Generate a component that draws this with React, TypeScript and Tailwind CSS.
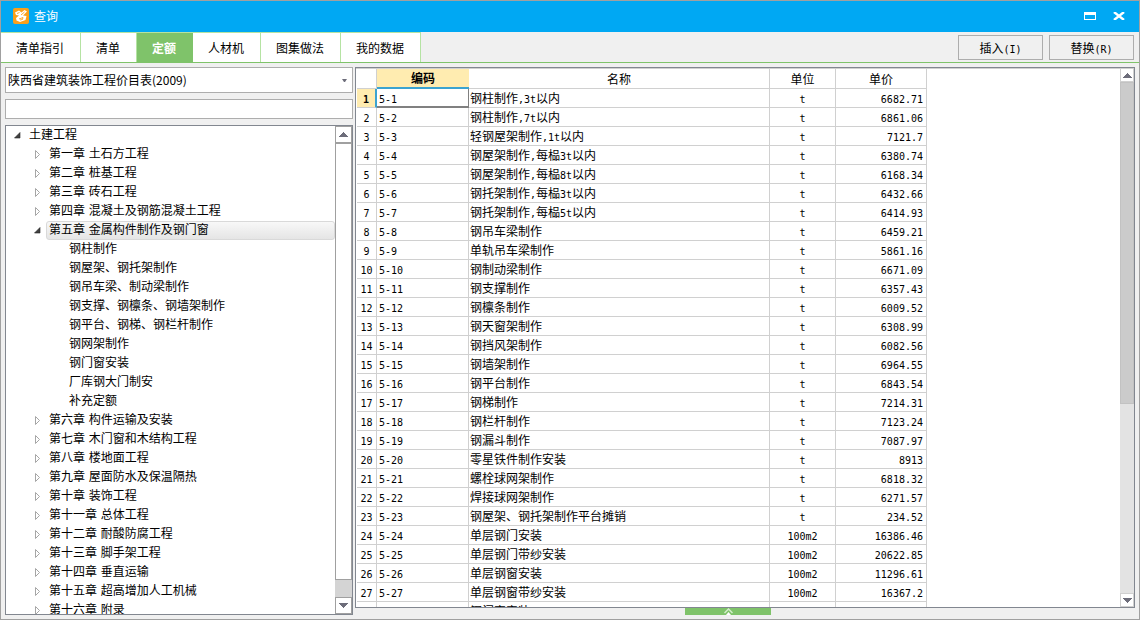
import { useState } from 'react';
import type { ReactNode } from 'react';

interface TreeNode {
  level: number;
  label: string;
  state?: 'open' | 'closed';
}

interface QuotaRow {
  code: string;
  name: string;
  unit: string;
  price: string;
}

const TABS = ['清单指引', '清单', '定额', '人材机', '图集做法', '我的数据'];

const TREE: TreeNode[] = [
  { level: 0, label: '土建工程', state: 'open' },
  { level: 1, label: '第一章 土石方工程', state: 'closed' },
  { level: 1, label: '第二章 桩基工程', state: 'closed' },
  { level: 1, label: '第三章 砖石工程', state: 'closed' },
  { level: 1, label: '第四章 混凝土及钢筋混凝土工程', state: 'closed' },
  { level: 1, label: '第五章 金属构件制作及钢门窗', state: 'open' },
  { level: 2, label: '钢柱制作' },
  { level: 2, label: '钢屋架、钢托架制作' },
  { level: 2, label: '钢吊车梁、制动梁制作' },
  { level: 2, label: '钢支撑、钢檩条、钢墙架制作' },
  { level: 2, label: '钢平台、钢梯、钢栏杆制作' },
  { level: 2, label: '钢网架制作' },
  { level: 2, label: '钢门窗安装' },
  { level: 2, label: '厂库钢大门制安' },
  { level: 2, label: '补充定额' },
  { level: 1, label: '第六章 构件运输及安装', state: 'closed' },
  { level: 1, label: '第七章 木门窗和木结构工程', state: 'closed' },
  { level: 1, label: '第八章 楼地面工程', state: 'closed' },
  { level: 1, label: '第九章 屋面防水及保温隔热', state: 'closed' },
  { level: 1, label: '第十章 装饰工程', state: 'closed' },
  { level: 1, label: '第十一章 总体工程', state: 'closed' },
  { level: 1, label: '第十二章 耐酸防腐工程', state: 'closed' },
  { level: 1, label: '第十三章 脚手架工程', state: 'closed' },
  { level: 1, label: '第十四章 垂直运输', state: 'closed' },
  { level: 1, label: '第十五章 超高增加人工机械', state: 'closed' },
  { level: 1, label: '第十六章 附录', state: 'closed' },
];

const ROWS: QuotaRow[] = [
  { code: '5-1', name: '钢柱制作,3t以内', unit: 't', price: '6682.71' },
  { code: '5-2', name: '钢柱制作,7t以内', unit: 't', price: '6861.06' },
  { code: '5-3', name: '轻钢屋架制作,1t以内', unit: 't', price: '7121.7' },
  { code: '5-4', name: '钢屋架制作,每榀3t以内', unit: 't', price: '6380.74' },
  { code: '5-5', name: '钢屋架制作,每榀8t以内', unit: 't', price: '6168.34' },
  { code: '5-6', name: '钢托架制作,每榀3t以内', unit: 't', price: '6432.66' },
  { code: '5-7', name: '钢托架制作,每榀5t以内', unit: 't', price: '6414.93' },
  { code: '5-8', name: '钢吊车梁制作', unit: 't', price: '6459.21' },
  { code: '5-9', name: '单轨吊车梁制作', unit: 't', price: '5861.16' },
  { code: '5-10', name: '钢制动梁制作', unit: 't', price: '6671.09' },
  { code: '5-11', name: '钢支撑制作', unit: 't', price: '6357.43' },
  { code: '5-12', name: '钢檩条制作', unit: 't', price: '6009.52' },
  { code: '5-13', name: '钢天窗架制作', unit: 't', price: '6308.99' },
  { code: '5-14', name: '钢挡风架制作', unit: 't', price: '6082.56' },
  { code: '5-15', name: '钢墙架制作', unit: 't', price: '6964.55' },
  { code: '5-16', name: '钢平台制作', unit: 't', price: '6843.54' },
  { code: '5-17', name: '钢梯制作', unit: 't', price: '7214.31' },
  { code: '5-18', name: '钢栏杆制作', unit: 't', price: '7123.24' },
  { code: '5-19', name: '钢漏斗制作', unit: 't', price: '7087.97' },
  { code: '5-20', name: '零星铁件制作安装', unit: 't', price: '8913' },
  { code: '5-21', name: '螺栓球网架制作', unit: 't', price: '6818.32' },
  { code: '5-22', name: '焊接球网架制作', unit: 't', price: '6271.57' },
  { code: '5-23', name: '钢屋架、钢托架制作平台摊销', unit: 't', price: '234.52' },
  { code: '5-24', name: '单层钢门安装', unit: '100m2', price: '16386.46' },
  { code: '5-25', name: '单层钢门带纱安装', unit: '100m2', price: '20622.85' },
  { code: '5-26', name: '单层钢窗安装', unit: '100m2', price: '11296.61' },
  { code: '5-27', name: '单层钢窗带纱安装', unit: '100m2', price: '16367.2' },
  { code: '', name: '钢门窗安装', unit: '', price: '' },
];

// Half-width characters are set in a monospace face, everything else in the CJK face
function Mixed({ text }: { text: string }) {
  return (
    <>
      {text.split(/([\x21-\x7e]+)/).map((part, index) =>
        index % 2 === 1 ? (
          <span key={index} className="font-['DejaVu_Sans_Mono',monospace] text-[10px] leading-none">
            {part}
          </span>
        ) : (
          part
        )
      )}
    </>
  );
}

function Triangle({ direction }: { direction: 'up' | 'down' }) {
  return (
    <svg width="9" height="5" viewBox="0 0 9 5" aria-hidden="true" shapeRendering="crispEdges">
      <path d={direction === 'up' ? 'M0 5 4 0H5L9 5Z' : 'M0 0H9L5 5H4Z'} fill="#6d6d7a" />
    </svg>
  );
}

function ToolButton({ children }: { children: ReactNode }) {
  return (
    <button
      type="button"
      className="h-[25px] w-[85px] border border-[#adadad] bg-[#f0f0f0] hover:bg-[#e5f1fb]"
    >
      {children}
    </button>
  );
}

function TitleBar() {
  return (
    <header className="flex h-[31px] shrink-0 items-center bg-[#00a8f3] pr-[6px] pb-px pl-3 text-white">
      <svg width="16" height="16" viewBox="0 0 16 16" aria-hidden="true">
        <rect width="16" height="16" rx="2" fill="#f9a01b" />
        <path d="M2 4.5 6 2.5 8.5 4.5 11.5 2 14 3.5 10 7.5 13.5 8 12.5 12 7 14 3.5 12.5 3 10 6 7.5 3 7Z" fill="#fff" />
        <path d="M4 5.5 6.5 4.5M8 7 11.5 4M6 11 10 9.5 9.5 11.5 7 12" fill="none" stroke="#f9a01b" strokeWidth="0.9" />
      </svg>
      <h1 className="ml-[5px] flex-1">查询</h1>
      <div className="flex items-center gap-[17px]">
        <button type="button" aria-label="最大化">
          <svg width="12" height="8" viewBox="0 0 12 8" shapeRendering="crispEdges">
            <path d="M0 0H12V8H0ZM1 3V7H11V3Z" fill="#fff" fillRule="evenodd" />
          </svg>
        </button>
        <button type="button" aria-label="关闭" className="mr-2">
          <svg width="12" height="8" viewBox="0 0 12 8">
            <path d="M1 0 11 8M11 0 1 8" stroke="#fff" strokeWidth="2.4" />
          </svg>
        </button>
      </div>
    </header>
  );
}

function TabBar({ active, onSelect }: { active: string; onSelect: (tab: string) => void }) {
  return (
    <div className="flex h-[31px] shrink-0 items-start justify-between border-b border-[#7fc36a]">
      <div role="tablist" className="flex h-[30px] border-t border-[#b5e3a3]">
        {TABS.map((tab) => (
          <button
            key={tab}
            type="button"
            role="tab"
            aria-selected={tab === active}
            onClick={() => onSelect(tab)}
            className={
              tab === active
                ? 'border-r border-[#7fc36a] bg-[#7fc36a] pt-px pr-4 pl-[15px] font-bold text-white'
                : 'border-r border-[#b5e3a3] bg-white pt-px pr-4 pl-[15px] hover:bg-[#eef8ea]'
            }
          >
            {tab}
          </button>
        ))}
      </div>
      <div className="flex gap-[6px] pt-[3px] pr-[5px]">
        <ToolButton>
          插入<Mixed text="(I)" />
        </ToolButton>
        <ToolButton>
          替换<Mixed text="(R)" />
        </ToolButton>
      </div>
    </div>
  );
}

function Expander({ open }: { open: boolean }) {
  return (
    <svg width="7" height="9" viewBox="0 0 7 9" aria-hidden="true">
      {open ? (
        <path d="M6 1.5V7H0.5Z" fill="#404040" stroke="#262626" strokeWidth="0.6" />
      ) : (
        <path d="M1.5 0.5 5.5 4.5 1.5 8.5Z" fill="#fff" stroke="#a6a6a6" />
      )}
    </svg>
  );
}

function ChapterTree() {
  const [selected, setSelected] = useState('第五章 金属构件制作及钢门窗');

  return (
    <div className="flex min-h-0 flex-1 border border-[#828790] bg-white">
      <ul
        role="tree"
        aria-label="章节"
        className="min-w-0 flex-1 overflow-hidden font-['DejaVu_Sans','Noto_Sans_CJK_SC',sans-serif]"
      >
        {TREE.map((node) => (
          <li
            key={node.label}
            role="treeitem"
            aria-level={node.level + 1}
            aria-selected={node.label === selected}
            className={
              node.level === 0
                ? 'flex h-[19px] items-center pl-[7px]'
                : node.level === 1
                  ? 'flex h-[19px] items-center pl-[27px]'
                  : 'flex h-[19px] items-center pl-[47px]'
            }
          >
            <span className="flex w-[13px] shrink-0 pl-px">
              {node.state && <Expander open={node.state === 'open'} />}
            </span>
            <button
              type="button"
              onClick={() => setSelected(node.label)}
              className={
                node.label === selected
                  ? 'flex h-[19px] flex-1 items-start rounded-[3px] border border-[#d9d9d9] bg-linear-to-b from-[#f8f8f8] to-[#e5e5e5] pl-[2px] leading-[17px] whitespace-nowrap'
                  : 'flex h-[19px] flex-1 items-start border border-transparent pl-[2px] leading-[17px] whitespace-nowrap'
              }
            >
              {node.label}
            </button>
          </li>
        ))}
      </ul>
      <div className="flex w-[17px] shrink-0 flex-col bg-[#d4d4d4]">
        <button
          type="button"
          aria-label="向上滚动"
          className="flex h-[17px] items-center justify-center border border-[#a0a0a0] bg-white"
        >
          <Triangle direction="up" />
        </button>
        <div className="flex-1 border border-[#a0a0a0] bg-white" />
        <div className="h-[17px]" />
        <button
          type="button"
          aria-label="向下滚动"
          className="flex h-[17px] items-center justify-center border border-[#a0a0a0] bg-white"
        >
          <Triangle direction="down" />
        </button>
      </div>
    </div>
  );
}

function SidePanel() {
  return (
    <aside className="flex w-[348px] shrink-0 flex-col">
      <div className="relative">
        <select
          aria-label="定额库"
          className="block h-[26px] w-full appearance-none border border-[#adadad] bg-white pl-[2px] leading-[24px]"
        >
          <option>陕西省建筑装饰工程价目表(2009)</option>
        </select>
        <svg
          width="5"
          height="3"
          viewBox="0 0 5 3"
          aria-hidden="true"
          className="pointer-events-none absolute top-3 right-[6px]"
        >
          <path d="M0 0H5L3 3H2Z" fill="#6d6d7a" />
        </svg>
      </div>
      <input
        type="text"
        aria-label="搜索"
        className="mt-[6px] mb-[6px] h-[20px] border border-[#adadad] bg-white px-1 outline-none"
      />
      <ChapterTree />
    </aside>
  );
}

function QuotaTable() {
  return (
    <table className="w-[570px] table-fixed border-separate border-spacing-0">
      <colgroup>
        <col className="w-[20px]" />
        <col className="w-[92px]" />
        <col className="w-[301px]" />
        <col className="w-[66px]" />
        <col className="w-[91px]" />
      </colgroup>
      <thead>
        <tr className="h-[20px] leading-[19px]">
          <td className="border-r border-b border-[#d0d0d0]" />
          <th scope="col" className="border-b-2 border-[#3ba3d0] bg-[#ffecb0] leading-[18px] font-bold">
            编码
          </th>
          <th scope="col" className="border-r border-b border-[#d0d0d0] font-normal">
            名称
          </th>
          <th scope="col" className="border-r border-b border-[#d0d0d0] font-normal">
            单位
          </th>
          <th scope="col" className="border-r border-b border-[#d0d0d0] font-normal">
            单价
          </th>
        </tr>
      </thead>
      <tbody>
        {ROWS.map((row, index) => (
          <tr key={index} className="h-[19px] leading-[18px]">
            <th
              scope="row"
              className={
                index === 0
                  ? 'border-r-2 border-b border-r-[#3ba3d0] border-b-[#d0d0d0] bg-[#ffecb0] font-bold'
                  : 'border-r border-b border-[#d0d0d0] font-normal'
              }
            >
              {row.code && <Mixed text={String(index + 1)} />}
            </th>
            <td
              className={
                index === 0
                  ? 'border-r border-b-2 border-[#808080] pl-[2px] leading-[17px]'
                  : 'border-r border-b border-[#d0d0d0] pl-[2px]'
              }
            >
              <Mixed text={row.code} />
            </td>
            <td className="border-r border-b border-[#d0d0d0] pl-px whitespace-nowrap">
              <Mixed text={row.name} />
            </td>
            <td className="border-r border-b border-[#d0d0d0] text-center">
              <Mixed text={row.unit} />
            </td>
            <td className="border-r border-b border-[#d0d0d0] pr-[3px] text-right">
              <Mixed text={row.price} />
            </td>
          </tr>
        ))}
      </tbody>
    </table>
  );
}

function QuotaPanel() {
  return (
    <main className="flex min-w-0 flex-1 flex-col">
      <div className="flex min-h-0 flex-1 border border-[#828790] bg-white">
        <div className="min-w-0 flex-1 overflow-hidden border-t border-[#d0d0d0] pl-px">
          <QuotaTable />
        </div>
        <div className="flex w-[14px] shrink-0 flex-col bg-[#e3e3e3]">
          <button
            type="button"
            aria-label="向上滚动"
            className="flex h-[14px] items-center justify-center border border-[#d0d0d0] bg-white"
          >
            <Triangle direction="up" />
          </button>
          <div className="flex-1">
            <div className="h-[63%] border border-[#c2c2c2] bg-[#cbcbcb]" />
          </div>
          <button
            type="button"
            aria-label="向下滚动"
            className="flex h-[14px] items-center justify-center border border-[#d0d0d0] bg-white"
          >
            <Triangle direction="down" />
          </button>
        </div>
      </div>
      <button
        type="button"
        aria-label="展开"
        className="ml-[330px] flex h-[7px] w-[86px] items-center justify-center bg-[#7fc36a]"
      >
        <svg width="9" height="7" viewBox="0 0 9 7" aria-hidden="true">
          <path d="M0.5 5 4.5 1 8.5 5" fill="none" stroke="#d5edcc" strokeWidth="1.5" />
          <path d="M2 7 4.5 4 7 7Z" fill="#fff" />
        </svg>
      </button>
    </main>
  );
}

export default function App() {
  const [activeTab, setActiveTab] = useState('定额');

  return (
    <div className="flex h-screen flex-col overflow-hidden border border-[#a0a0a0] bg-[#f0f0f0] font-['Noto_Sans_CJK_SC',sans-serif] text-[12px] leading-[18px] text-black">
      <TitleBar />
      <TabBar active={activeTab} onSelect={setActiveTab} />
      <div className="flex min-h-0 flex-1 gap-[2px] pt-1 pr-1 pb-1 pl-1">
        <SidePanel />
        <QuotaPanel />
      </div>
    </div>
  );
}
